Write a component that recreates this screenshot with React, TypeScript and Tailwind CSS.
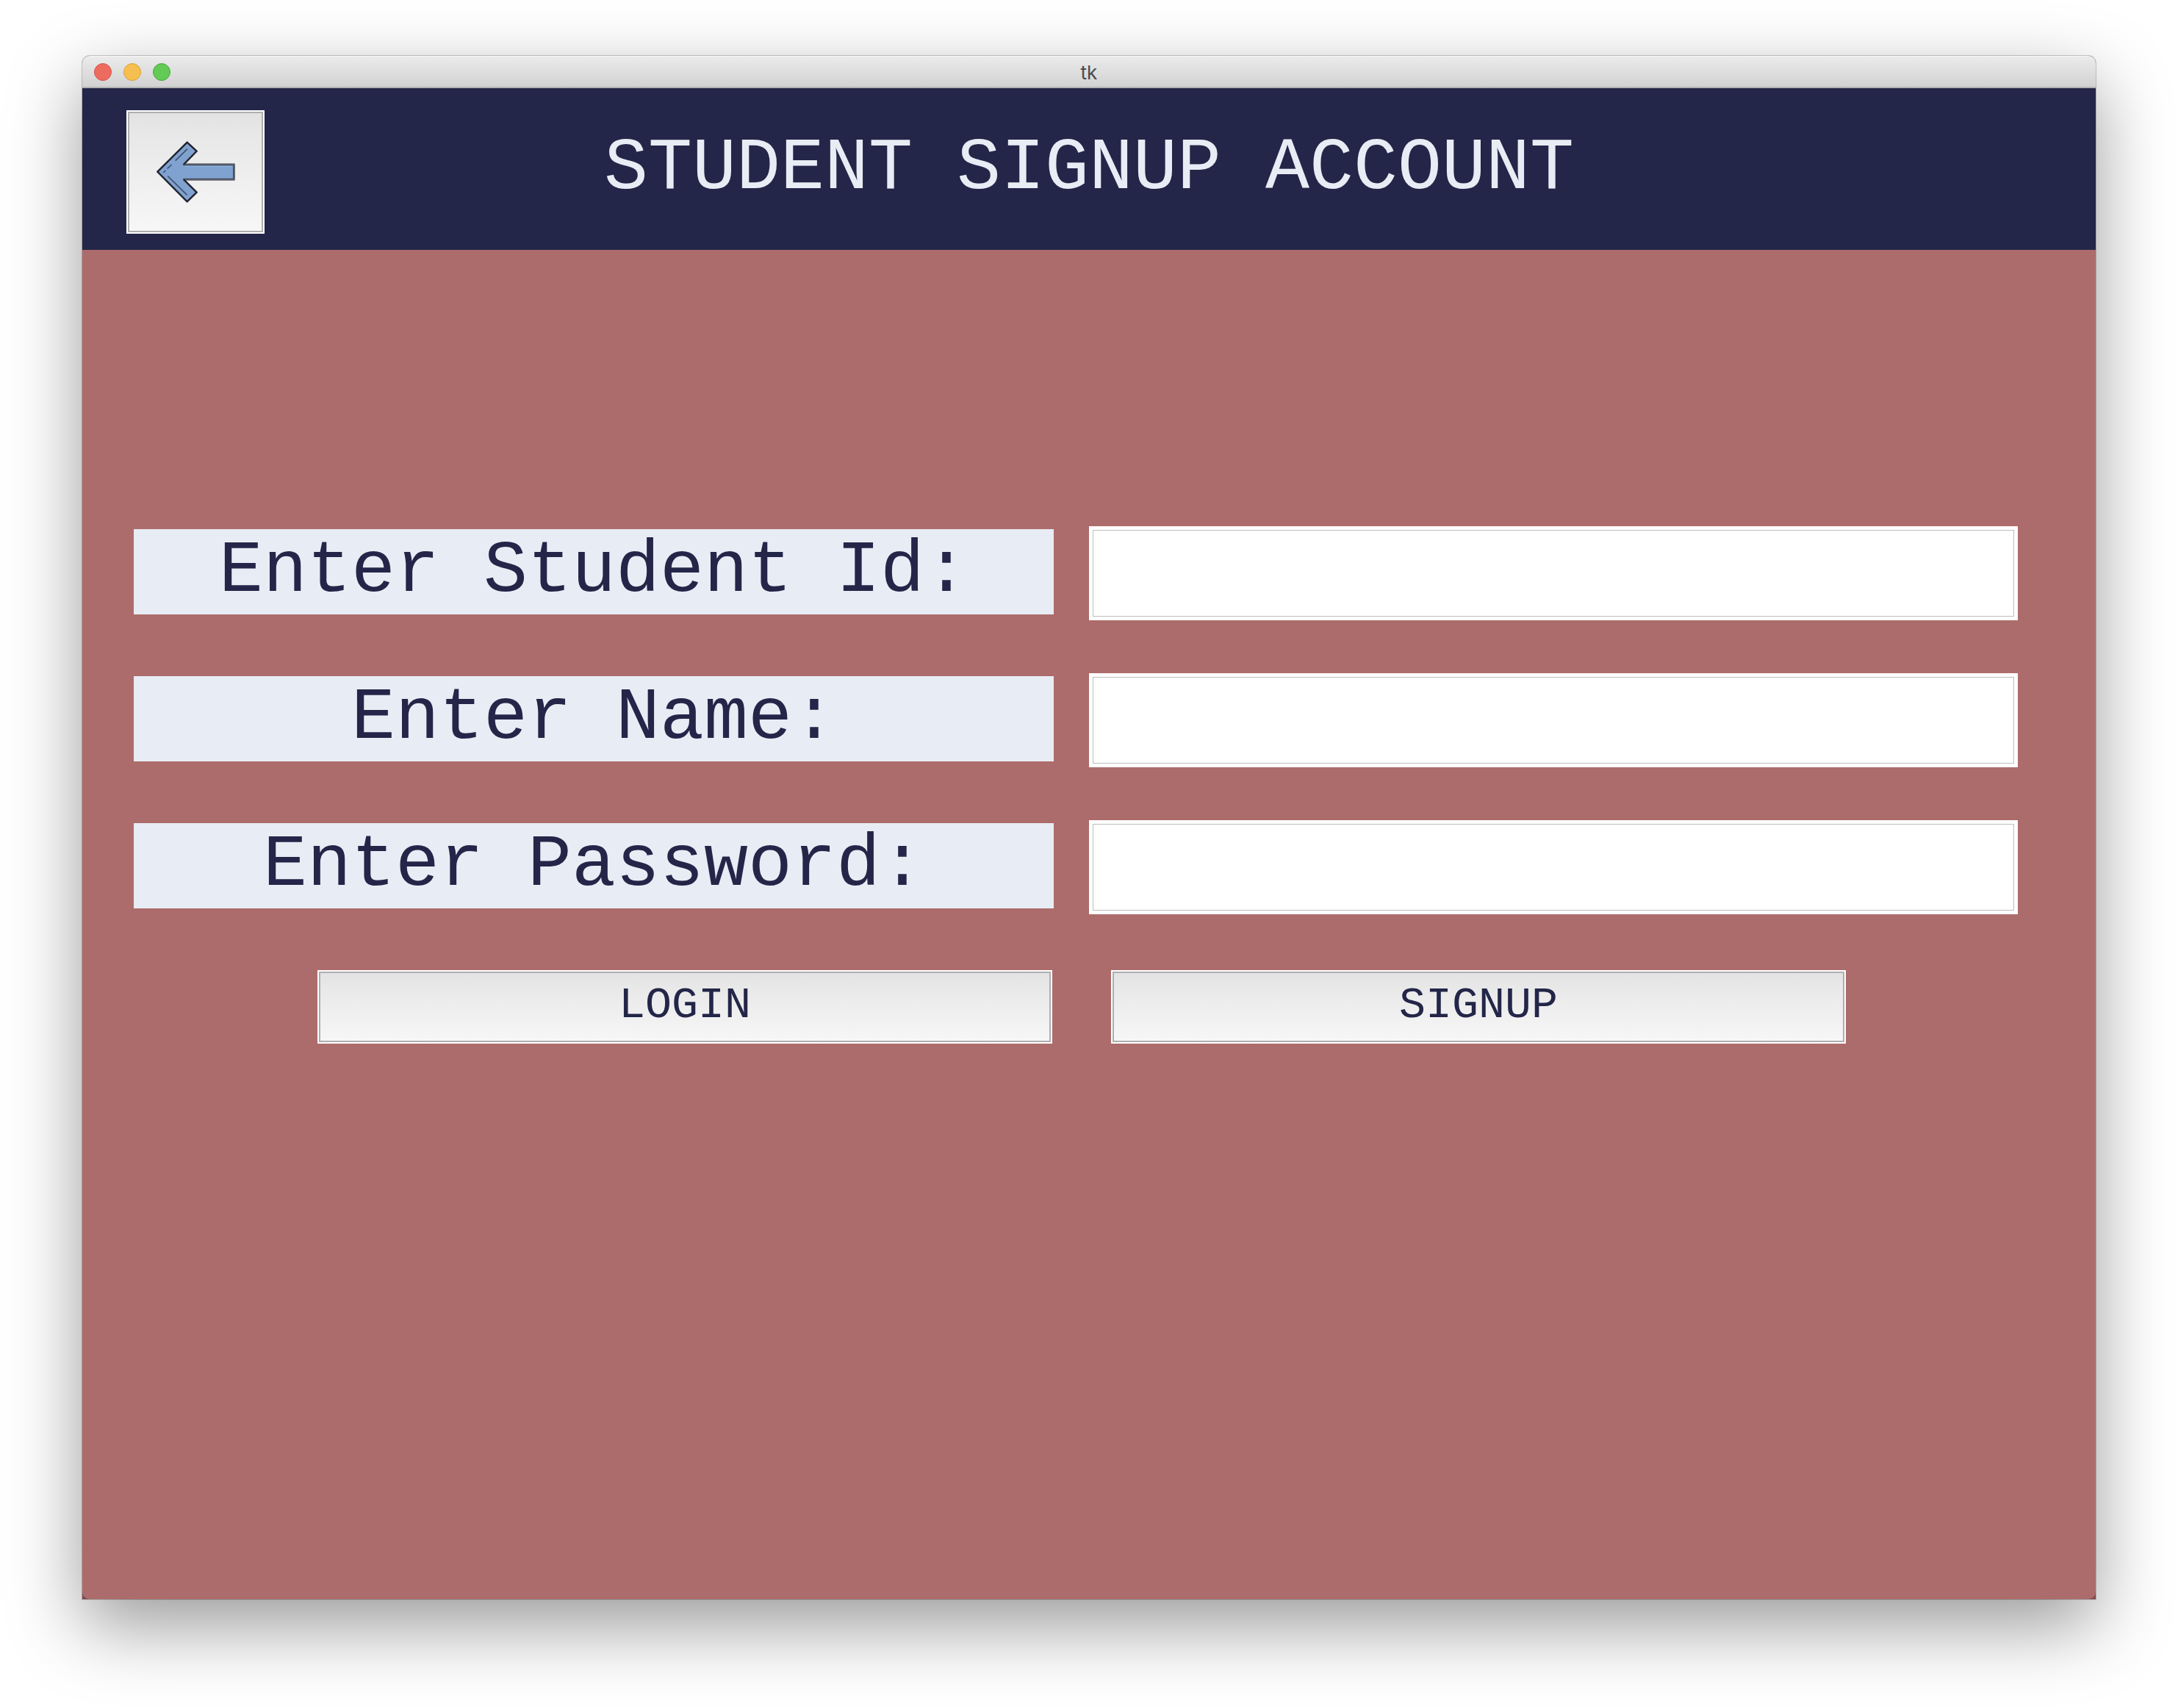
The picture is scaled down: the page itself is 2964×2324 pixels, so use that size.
import type { ReactNode } from "react";

const MONO = "font-['Courier_New','Liberation_Mono',monospace]";
const RAISED =
  "border-2 border-white bg-linear-to-b from-[#e2e2e2] via-[#e8e8e8] via-20% to-[#f7f7f7] shadow-[inset_0_0_0_2px_#aeaeae]";

function TrafficLights() {
  return (
    <div className="flex gap-4">
      <button type="button" aria-label="Close" className="size-6 rounded-full border border-[#d6524a] bg-[#ee6b60]" />
      <button type="button" aria-label="Minimize" className="size-6 rounded-full border border-[#d9a03a] bg-[#f6c050]" />
      <button type="button" aria-label="Zoom" className="size-6 rounded-full border border-[#4ba63f] bg-[#63ca56]" />
    </div>
  );
}

function BackArrow() {
  return (
    <svg viewBox="252 306 552 492" className="block h-full w-full" aria-hidden="true">
      <path
        d="M373 551 L494 431 L533 467 L480 521 H686 V583 H480 L533 635 L494 673 Z"
        fill="#80a2d0"
        stroke="#666a72"
        strokeWidth="8"
        strokeLinejoin="round"
      />
      <path d="M484 529 H680" stroke="#8cb2e2" strokeWidth="4" />
      <path
        d="M480 521 L533 467 L494 431 L373 551 L494 673 L533 635 L480 583"
        fill="none"
        stroke="#1c2030"
        strokeWidth="6"
        strokeLinejoin="round"
      />
      <path d="M478 524 H683 V580 H478" fill="none" stroke="#353c4c" strokeWidth="3" />
      <path
        d="M446 506 L495 458 M413 538 L431 522 M397 555 L406 546 M415 569 L494 646"
        fill="none"
        stroke="#3f526f"
        strokeWidth="5"
      />
    </svg>
  );
}

function Field({ id, label, type = "text" }: { id: string; label: string; type?: string }) {
  return (
    <div className="grid grid-cols-[1252fr_1264fr] items-start gap-12">
      <label
        htmlFor={id}
        className={`${MONO} mt-1 flex h-[116px] items-center justify-center bg-[#e8ecf4] text-[100px] leading-[100px] whitespace-nowrap text-[#232648]`}
      >
        {label}
      </label>
      <input
        id={id}
        type={type}
        className={`${MONO} h-32 w-full min-w-0 border-[5px] border-white bg-white px-4 text-[80px] text-[#232648] shadow-[inset_0_0_0_1px_#bdbdbd] outline-none`}
      />
    </div>
  );
}

function ActionButton({ children }: { children: ReactNode }) {
  return (
    <button
      type="button"
      className={`${MONO} ${RAISED} flex h-[100px] flex-1 items-center justify-center pb-1 text-[60px] leading-[60px] text-[#232648]`}
    >
      {children}
    </button>
  );
}

export default function App() {
  return (
    <div className="flex min-h-screen flex-col overflow-hidden bg-white px-28 pt-19 pb-37">
      <main className="flex flex-1 flex-col rounded-t-[10px] bg-[#814b4e] shadow-[0_0_0_1px_rgba(0,0,0,0.2),0_36px_100px_rgba(0,0,0,0.4)]">
        <div className="grid h-11 grid-cols-[1fr_auto_1fr] items-center rounded-t-[10px] border-t border-b-2 border-t-[#f6f6f6] border-b-[#b3b3b3] bg-linear-to-b from-[#ebebeb] to-[#d2d2d2] px-4">
          <TrafficLights />
          <span className="pt-0.5 font-['Inter',sans-serif] text-[26px] leading-8 text-[#4b4b4b]">tk</span>
        </div>

        <header className="grid h-[220px] grid-cols-[1fr_auto_1fr] items-center bg-[#232648] px-15">
          <button type="button" aria-label="Back" className={`${RAISED} mt-2 h-[168px] w-[188px]`}>
            <BackArrow />
          </button>
          <h1 className={`${MONO} text-[100px] leading-[100px] whitespace-nowrap text-[#e8ecf4]`}>
            STUDENT SIGNUP ACCOUNT
          </h1>
        </header>

        <form
          className="flex-1 rounded-b-[10px] bg-[#ac6c6b] pt-[376px]"
          onSubmit={(event) => event.preventDefault()}
        >
          <div className="flex flex-col gap-18 pr-[106px] pl-[70px]">
            <Field id="student-id" label="Enter Student Id:" />
            <Field id="name" label="Enter Name:" />
            <Field id="password" label="Enter Password:" type="password" />
          </div>
          <div className="mt-19 flex gap-20 pr-[340px] pl-80">
            <ActionButton>LOGIN</ActionButton>
            <ActionButton>SIGNUP</ActionButton>
          </div>
        </form>
      </main>
    </div>
  );
}
